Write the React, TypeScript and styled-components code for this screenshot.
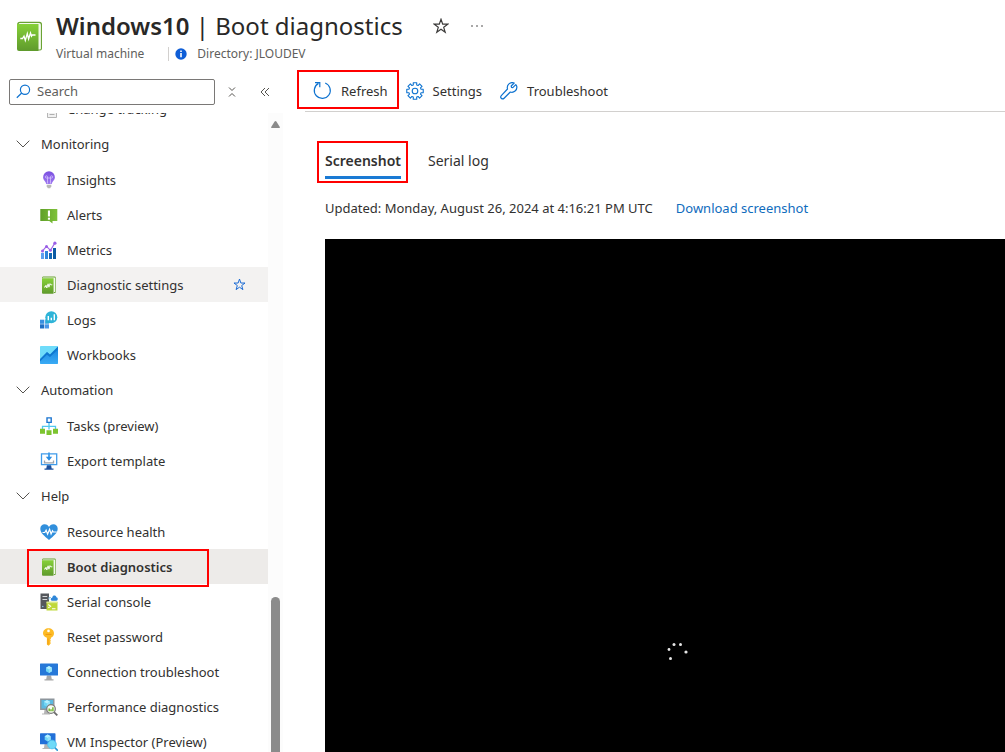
import React from "react";
import styled, { createGlobalStyle, css } from "styled-components";

const GlobalStyle = createGlobalStyle`
  *, *::before, *::after { box-sizing: border-box; }
  body {
    margin: 0;
    background: #fff;
    color: #323130;
    font-family: "Noto Sans", "Segoe UI", sans-serif;
    font-size: 13px;
    line-height: 20px;
  }
  button, input { font: inherit; color: inherit; }
  svg { display: block; flex: none; }
`;

const highlight = css`
  position: relative;
  &::after {
    content: "";
    position: absolute;
    border: 2px solid #ff0000;
    pointer-events: none;
  }
`;

const Page = styled.div`
  display: flex;
  flex-direction: column;
  height: 100vh;
  overflow: hidden;
`;

const Header = styled.header`
  display: flex;
  flex: none;
  gap: 13px;
  height: 70px;
  padding: 9px 16px 0 17px;
`;

const HeaderIcon = styled.div`
  padding-top: 12px;
`;

const TitleRow = styled.div`
  display: flex;
  align-items: center;
  height: 34px;
`;

const Title = styled.h1`
  margin: 0 29px 0 0;
  font-size: 24px;
  line-height: 34px;
  font-weight: 400;
  color: #292827;
  white-space: nowrap;
  strong { font-weight: 600; }
`;

const IconButton = styled.button`
  display: flex;
  align-items: center;
  justify-content: center;
  flex: none;
  width: 18px;
  height: 18px;
  padding: 0;
  border: 0;
  background: none;
`;

const MoreButton = styled(IconButton)`
  margin-left: 18px;
`;

const Subtitle = styled.div`
  display: flex;
  align-items: center;
  height: 22px;
  font-size: 12px;
  color: #605e5c;
  white-space: nowrap;
`;

const Directory = styled.span`
  display: flex;
  align-items: center;
  gap: 10px;
  height: 14px;
  margin-left: 24px;
  padding-left: 6px;
  border-left: 1px solid #d2d0ce;
`;

const Body = styled.div`
  display: flex;
  flex: 1;
  min-height: 0;
`;

const Sidebar = styled.nav`
  display: flex;
  flex-direction: column;
  flex: none;
  width: 283px;
`;

const SearchRow = styled.div`
  display: flex;
  align-items: center;
  flex: none;
  height: 43px;
  padding: 0 9px;
`;

const SearchBox = styled.label`
  display: flex;
  align-items: center;
  gap: 6px;
  width: 206px;
  height: 26px;
  margin-right: 8px;
  padding: 0 6px;
  border: 1px solid #7a7876;
  border-radius: 2px;
`;

const SearchInput = styled.input`
  flex: 1;
  min-width: 0;
  height: 22px;
  padding: 0 0 2px;
  border: 0;
  outline: 0;
  background: none;
  &::placeholder { color: #605e5c; opacity: 1; }
`;

const CollapseButton = styled(IconButton)`
  margin-left: 15px;
`;

const MenuArea = styled.div`
  display: flex;
  flex: 1;
  min-height: 0;
  overflow: hidden;
`;

const Menu = styled.div`
  flex: 1;
  margin-top: -22px;
`;

const List = styled.ul`
  margin: 0;
  padding: 0;
  list-style: none;
`;

const GroupButton = styled.button`
  display: flex;
  align-items: center;
  gap: 11px;
  width: 100%;
  height: 35px;
  margin-bottom: 1px;
  padding: 0 16px;
  border: 0;
  background: none;
  text-align: left;
`;

const Item = styled.li<{ $hover?: boolean; $active?: boolean }>`
  display: flex;
  align-items: center;
  height: 35px;
  padding-right: 20px;
  background: ${(p) => (p.$active ? "#edebe9" : p.$hover ? "#f3f2f1" : "none")};
  font-weight: ${(p) => (p.$active ? 600 : 400)};
  ${(p) =>
    p.$active &&
    css`
      ${highlight}
      &::after { left: 27px; top: 0; width: 182px; height: 38px; }
    `}
`;

const ItemLink = styled.a`
  display: flex;
  flex: 1;
  align-items: center;
  gap: 9px;
  padding-left: 40px;
  color: inherit;
  text-decoration: none;
  white-space: nowrap;
`;

const ScrollTrack = styled.div`
  display: flex;
  flex-direction: column;
  align-items: center;
  flex: none;
  width: 15px;
  padding-top: 7px;
  background: #fcfcfc;
`;

const ScrollThumb = styled.div`
  flex: 1;
  width: 9px;
  margin-top: 468px;
  border-radius: 5px 5px 0 0;
  background: #8b8b8b;
`;

const Main = styled.main`
  display: flex;
  flex-direction: column;
  flex: 1;
  min-width: 0;
  padding-left: 22px;
`;

const Toolbar = styled.div`
  display: flex;
  align-items: center;
  flex: none;
  gap: 18px;
  height: 42px;
  padding-left: 8px;
  border-bottom: 1px solid #d2d0ce;
`;

const Command = styled.button<{ $marked?: boolean }>`
  display: flex;
  align-items: center;
  gap: 9px;
  height: 38px;
  padding: 0;
  border: 0;
  background: none;
  ${(p) =>
    p.$marked &&
    css`
      ${highlight}
      &::after { left: -16px; right: -11px; top: -2px; height: 39px; }
    `}
`;

const Content = styled.div`
  display: flex;
  flex-direction: column;
  flex: 1;
  min-height: 0;
  padding: 33px 0 0 20px;
`;

const Tabs = styled.div`
  display: flex;
  gap: 27px;
`;

const Tab = styled.button<{ $selected?: boolean }>`
  height: 34px;
  padding: 0;
  border: 0;
  border-bottom: 3px solid ${(p) => (p.$selected ? "#1a7ad4" : "transparent")};
  background: none;
  font-size: 14px;
  font-weight: ${(p) => (p.$selected ? 600 : 400)};
  ${(p) =>
    p.$selected &&
    css`
      ${highlight}
      &::after { left: -8px; right: -7px; top: -4px; height: 42px; }
    `}
`;

const Updated = styled.p`
  display: flex;
  flex: none;
  gap: 23px;
  margin: 19px 0 21px;
  white-space: nowrap;
`;

const Download = styled.a`
  color: #0f6cbd;
  text-decoration: none;
`;

const Screen = styled.div`
  flex: 1;
  padding: 403px 0 0 342px;
  background: #000;
`;

/* ---------- icons ---------- */

const Book = ({ w, h }: { w: number; h: number }) => (
  <svg width={w} height={h} viewBox="0 0 26 32" preserveAspectRatio="none">
    <defs>
      <linearGradient id="book" x1="0" y1="0" x2="0" y2="1">
        <stop offset="0" stopColor="#86d039" />
        <stop offset="1" stopColor="#5f9a2c" />
      </linearGradient>
    </defs>
    <path d="M3 .7h19.500q2.500 0 2.500 2.500V27.500q0 2-2 2h-2V3H0q.5-2.300 3-2.300z" fill="#6aa334" />
    <path d="M2.500 1.900H22q1.900 0 1.900 1.900v23.700q0 1-1 1h-2V3.500H1z" fill="#f4faee" />
    <path d="M0 3h21.500V30H2q-2 0-2-2z" fill="url(#book)" />
    <path d="M3.300 17.500h2.200l1.500-2.500 1.300 4.500 2-7 1.300 5.500 1.900-6 1 3.300.8-1.300h3.200" fill="none" stroke="#fff" strokeWidth="1.300" />
  </svg>
);

const Icon = ({ children }: { children: React.ReactNode }) => (
  <svg width="18" height="18" viewBox="0 0 18 18" fill="none">
    {children}
  </svg>
);

const ItemBook = () => (
  <Icon>
    <path d="M3 .6h11.500q1.300 0 1.300 1.300v14.100q0 1-1 1h-1V2.200H2Q2.200.6 3 .6z" fill="#6aa334" />
    <path d="M3 1.400h11.300q.9 0 .9.9v13.700h-1.600V2.400H2.500z" fill="#f4faee" />
    <path d="M2 2.300h11.500V17.700H3q-1 0-1-1z" fill="url(#book)" />
    <path d="M4 11h1.300l.7-1.800.8 2.800 1.300-4.200.8 3.400 1.100-3.600.7 1.200h1.600" stroke="#fff" strokeWidth=".9" />
  </Icon>
);

const Change = () => (
  <Icon>
    <path d="M7.500 2h9v15.500h-9z" fill="#f1f1f1" stroke="#b5b5b5" />
    <path d="M9.500 11.500h5M9.500 14.500h5" stroke="#b0b0b0" />
  </Icon>
);

const Insights = () => (
  <Icon>
    <defs>
      <linearGradient id="bulb" x1="0" y1="0" x2="0" y2="1">
        <stop offset="0" stopColor="#7a4fe0" />
        <stop offset="1" stopColor="#a07af0" />
      </linearGradient>
    </defs>
    <path d="M9 .3a5.900 5.900 0 0 1 5.900 5.900c0 3-2.800 4.100-3.100 6.900H6.200C5.900 10.300 3.100 9.200 3.100 6.200A5.900 5.900 0 0 1 9 .3z" fill="url(#bulb)" />
    <path d="M7.500 12.500V7M10.500 12.500V7M7.500 7H6.200a1.100 1.100 0 1 1 1.300-1.200zM10.500 7h1.300a1.100 1.100 0 1 0-1.300-1.200zM7.500 7h3" stroke="#dccdff" strokeWidth=".7" />
    <path d="M6.700 13.700h4.600v1.500l-1.100 2H7.800l-1.100-2z" fill="#b8b8b8" />
  </Icon>
);

const Alerts = () => (
  <Icon>
    <defs>
      <linearGradient id="alert" x1="0" y1="0" x2="1" y2="0">
        <stop offset="0" stopColor="#5f9f28" />
        <stop offset="1" stopColor="#7fc23a" />
      </linearGradient>
    </defs>
    <path d="M.3 3h17v12h-4.800v2.500L9.300 15h-9z" fill="url(#alert)" />
    <path d="M7.900 4.500H10v6H7.900z" fill="#fff" />
    <path d="M7.900 11.700H10v2H7.900z" fill="#fff" />
  </Icon>
);

const Metrics = () => (
  <Icon>
    <path d="M1 12h3v6H1z" fill="#5ea0ef" />
    <path d="M5 10h3v8H5z" fill="#2f86dc" />
    <path d="M9 12h3v6H9z" fill="#1267b4" />
    <path d="M13 7h3v11h-3z" fill="#0b5aa3" />
    <path d="M2.500 9.800l4-4.500 4 4 4.200-7" stroke="#a067e8" strokeWidth="1.200" />
    <g fill="#9a5fe6">
      <circle cx="2.500" cy="10" r="1.500" />
      <circle cx="6.500" cy="5.400" r="1.500" />
      <circle cx="10.400" cy="9.200" r="1.500" />
      <circle cx="14.900" cy="2.200" r="1.600" />
    </g>
  </Icon>
);

const Logs = () => (
  <Icon>
    <path d="M0 8.700h4.200v4.100H0z" fill="#3a90e0" />
    <path d="M0 13.300h4.200v4.200H0z" fill="#1f6fc4" />
    <path d="M4.800 13.300H9v4.200H4.800z" fill="#4a97e8" />
    <path d="M4.800 8.700H9v4.100H4.800z" fill="#6fb0f2" />
    <circle cx="11.300" cy="6.200" r="6" fill="#2fb4d8" />
    <path d="M5.300 12.500l.5-5 5 4.500z" fill="#2aaed4" />
    <path d="M8.300 5v4.300M11.300 6.800v2.500M14.300 3.300v6" stroke="#fff" strokeWidth="1.400" />
  </Icon>
);

const Workbooks = () => (
  <Icon>
    <defs>
      <linearGradient id="wb" x1="0" y1="0" x2="0" y2="1">
        <stop offset="0" stopColor="#1580dc" />
        <stop offset="1" stopColor="#3aabf5" />
      </linearGradient>
    </defs>
    <rect width="18" height="18" rx=".8" fill="#6fdcfa" />
    <path d="M0 13.500l7-7.200 3 2.500L18 .8V17q0 1-1 1H1q-1 0-1-1z" fill="url(#wb)" />
    <path d="M0 13l7-7 3 2.500L18 .5V3.500l-8 7.500-3-2.300L0 15.500z" fill="#0f78d0" />
  </Icon>
);

const Tasks = () => (
  <Icon>
    <path d="M9 5.500v7M2.500 12.500V9.300h13v3.200" stroke="#50c8f0" strokeWidth="1.300" />
    <path d="M7 .9h4.200v4.500H7z" fill="#fff" stroke="#1a74d0" strokeWidth="1.400" />
    <path d="M0 11.700h5v5H0zM6.500 13.200h5V18h-5zM13 11.700h5v5h-5z" fill="#7cc42f" />
  </Icon>
);

const Export = () => (
  <Icon>
    <path d="M1.500 1.800h15.200v10.900H1.500z" fill="#fff" stroke="#3f9bea" strokeWidth="1.300" />
    <path d="M6.900 13.200h4.200l.6 3.200H13.500v1.400H4.500v-1.400h1.800z" fill="#1b4f9c" />
    <path d="M4.500 8.500v2.300h9V8.500" stroke="#9aa3ad" strokeWidth="1.300" />
    <path d="M9 .5v5.500" stroke="#3f9bea" strokeWidth="1.800" />
    <path d="M5.800 4.800h6.400L9 8.700z" fill="#2a8de2" />
  </Icon>
);

const Health = () => (
  <Icon>
    <path d="M9 17C4.500 13 .3 10 .3 5.700.3 3 2.300 1.300 4.600 1.300 6.700 1.300 8.300 2.500 9 4c.7-1.500 2.300-2.700 4.400-2.700 2.300 0 4.300 1.700 4.300 4.400C17.700 10 13.500 13 9 17z" fill="#318fdc" />
    <path d="M2.500 9.500h2.300l1.300-2.300 1.500 4 2-5 1.500 4.800 1.400-3.200.8 1.200h3.500" stroke="#fff" strokeWidth="1.200" />
  </Icon>
);

const Serial = () => (
  <Icon>
    <path d="M.5.500h8.500V16H.5z" fill="#55585c" />
    <path d="M2.500 3.500h4.700M2.500 6.500h4.700" stroke="#d5d8db" strokeWidth="1.100" />
    <circle cx="2.800" cy="13.500" r=".8" fill="#8fc6e8" />
    <path d="M12.500 7.800c-2.300 0-2.300-3-.3-3.100.4-2.800 3.900-2.600 4.200-.4 1.800.2 1.800 3.200 0 3.500z" fill="#2f86d8" />
    <path d="M9 6.500v-2h2" stroke="#8fc6e8" />
    <path d="M6.500 9h11v8.500h-11z" fill="#bfd83a" />
    <path d="M6.500 8.500h11v1.700h-11z" fill="#d9e98a" />
    <path d="M8.300 11.500l2.300 1.700-2.300 1.700M12 15.800h3.500" stroke="#fff" strokeWidth="1.100" />
  </Icon>
);

const Key = () => (
  <Icon>
    <path d="M8.500.3c3 0 5.500 2 5.500 5 0 2.100-1.200 3.600-3.100 4.400v1l-.8 1 .8 1-.8 1.200.8 1.100-1.200 1.800-1.200 1-1.600-1.200V9.700C4.500 8.900 3 7.400 3 5.300 3 2.300 5.500.3 8.500.3z" fill="#fdbb25" />
    <path d="M8 10.500v6" stroke="#f29a10" strokeWidth=".9" />
    <path d="M5.500 5.900h6v1.100h-6z" fill="#f29a10" />
    <circle cx="8.500" cy="2.900" r="1.300" fill="#fff" />
  </Icon>
);

const Cube = ({ x, y }: { x: number; y: number }) => (
  <g transform={`translate(${x} ${y})`}>
    <path d="M0-3.500l3 1.700v3.500L0 3.500l-3-1.800v-3.500z" fill="#6fd5f5" />
    <path d="M0-3.500l3 1.700L0 0l-3-1.800z" fill="#b5f0ff" />
    <path d="M0 0l3-1.800v3.500L0 3.500z" fill="#94e2fa" />
  </g>
);

const Connection = () => (
  <Icon>
    <path d="M6.900 12.500h4.200l.7 3.800h1.700v1.200h-9v-1.200h1.700z" fill="#a8a8a8" />
    <rect y=".5" width="18" height="12" rx=".6" fill="#2678d8" />
    <Cube x={9} y={6.500} />
  </Icon>
);

const Performance = () => (
  <Icon>
    <path d="M4.500 11.500h4l.5 4H10v1H2v-1h2z" fill="#b5b5b5" />
    <path d="M.8 1.200h13v10H.8z" fill="#5bb9e0" stroke="#8d959c" strokeWidth="1.400" />
    <Cube x={7} y={5.500} />
    <path d="M14 14.200l3.300 3.200" stroke="#6c6c6c" strokeWidth="1.800" />
    <circle cx="11" cy="11" r="4.300" fill="#f7fbf2" stroke="#7d7d7d" strokeWidth="1.300" />
    <path d="M9.200 13.300V10.500M11 13.300v-2M12.900 13.300v-4" stroke="#76b733" strokeWidth="1.500" />
  </Icon>
);

const Inspector = () => (
  <Icon>
    <path d="M4.500 11h4l.5 4H10v1H2.500v-1H4z" fill="#b5b5b5" />
    <rect y=".3" width="15.500" height="11" rx=".6" fill="#2270d8" />
    <Cube x={7.700} y={5} />
    <path d="M14.800 14.600l2.500 2.500" stroke="#2a98d6" strokeWidth="1.600" strokeLinecap="round" />
    <circle cx="12" cy="11.500" r="4.300" fill="#6edaf8" stroke="#54c4ee" />
  </Icon>
);

const Star = ({ size, color }: { size: number; color: string }) => (
  <svg width={size} height={size} viewBox="0 0 16 16" fill="none" stroke={color} strokeWidth="1.200">
    <path d="M8 1.300l1.700 4.900h5.100l-4.100 3.100 1.500 5L8 11.300l-4.200 3 1.500-5-4.100-3.100h5.100z" />
  </svg>
);

const Chevron = () => (
  <svg width="14" height="14" viewBox="0 0 14 14" fill="none" stroke="#55534f">
    <path d="M.7 3.700L7 10l6.300-6.300" />
  </svg>
);

const RefreshIcon = () => (
  <svg width="19" height="19" viewBox="0 0 19 19" fill="none" stroke="#0f73d0" strokeWidth="1.200">
    <path d="M12.200 2A8 8 0 1 1 5.500 2.400" />
    <path d="M2 1.700h4.800v4.500" />
  </svg>
);

const GearIcon = () => {
  const cx = 9, cy = 9;
  const pts: string[] = [];
  for (let i = 0; i < 8; i++) {
    const base = (i * Math.PI) / 4;
    [[-0.27, 6.300], [-0.21, 8.400], [0.21, 8.400], [0.27, 6.300]].forEach(([a, r]) =>
      pts.push(`${(cx + r * Math.sin(base + a)).toFixed(2)},${(cy - r * Math.cos(base + a)).toFixed(2)}`)
    );
  }
  return (
    <svg width="18" height="18" viewBox="0 0 18 18" fill="none" stroke="#0f73d0" strokeWidth="1.100" strokeLinejoin="round">
      <polygon points={pts.join(" ")} />
      <circle cx="9" cy="9" r="2.800" />
    </svg>
  );
};

const WrenchIcon = () => (
  <svg width="18" height="18" viewBox="0 0 18 18" fill="none" stroke="#0f73d0" strokeWidth="1.200" strokeLinejoin="round">
    <path d="M15.800 2.600l-3 3-1.300-.3-.3-1.300 3-3A5 5 0 0 0 7.500 7L1.300 13.600a2 2 0 0 0 0 2.700 2 2 0 0 0 2.800 0L10.300 10a5 5 0 0 0 6.500-5.500 5 5 0 0 0-1-1.900z" />
  </svg>
);

/* ---------- data ---------- */

type Entry = { label: string; icon: React.ReactNode; hover?: boolean; active?: boolean };

const groups: { title?: string; entries: Entry[] }[] = [
  { entries: [{ label: "Change tracking", icon: <Change /> }] },
  {
    title: "Monitoring",
    entries: [
      { label: "Insights", icon: <Insights /> },
      { label: "Alerts", icon: <Alerts /> },
      { label: "Metrics", icon: <Metrics /> },
      { label: "Diagnostic settings", icon: <ItemBook />, hover: true },
      { label: "Logs", icon: <Logs /> },
      { label: "Workbooks", icon: <Workbooks /> },
    ],
  },
  {
    title: "Automation",
    entries: [
      { label: "Tasks (preview)", icon: <Tasks /> },
      { label: "Export template", icon: <Export /> },
    ],
  },
  {
    title: "Help",
    entries: [
      { label: "Resource health", icon: <Health /> },
      { label: "Boot diagnostics", icon: <ItemBook />, active: true },
      { label: "Serial console", icon: <Serial /> },
      { label: "Reset password", icon: <Key /> },
      { label: "Connection troubleshoot", icon: <Connection /> },
      { label: "Performance diagnostics", icon: <Performance /> },
      { label: "VM Inspector (Preview)", icon: <Inspector /> },
    ],
  },
];

export default function App() {
  return (
    <Page>
      <GlobalStyle />
      <Header>
        <HeaderIcon>
          <Book w={26} h={32} />
        </HeaderIcon>
        <div>
          <TitleRow>
            <Title>
              <strong>Windows10</strong> | Boot diagnostics
            </Title>
            <IconButton aria-label="Add to favorites">
              <Star size={16} color="#3b3a39" />
            </IconButton>
            <MoreButton aria-label="More actions">
              <svg width="14" height="4" viewBox="0 0 14 4" fill="#3b3a39">
                <circle cx="2" cy="2" r=".8" />
                <circle cx="7" cy="2" r=".8" />
                <circle cx="12" cy="2" r=".8" />
              </svg>
            </MoreButton>
          </TitleRow>
          <Subtitle>
            Virtual machine
            <Directory>
              <svg width="12" height="12" viewBox="0 0 12 12">
                <circle cx="6" cy="6" r="5.700" fill="#0f5ed7" />
                <path d="M5.200 5h1.600v4.300H5.200zM5.200 2.500h1.600V4H5.200z" fill="#fff" />
              </svg>
              Directory: JLOUDEV
            </Directory>
          </Subtitle>
        </div>
      </Header>
      <Body>
        <Sidebar>
          <SearchRow>
            <SearchBox>
              <svg width="15" height="15" viewBox="0 0 15 15" fill="none" stroke="#0f73d0" strokeWidth="1.200">
                <circle cx="9" cy="5.700" r="4.600" />
                <path d="M5.700 9L.8 13.800" />
              </svg>
              <SearchInput type="text" placeholder="Search" aria-label="Search menu" />
            </SearchBox>
            <IconButton aria-label="Collapse all groups">
              <svg width="8" height="10" viewBox="0 0 8 10" fill="none" stroke="#55534f">
                <path d="M1 .5l3 3 3-3M1 9.500l3-3 3 3" />
              </svg>
            </IconButton>
            <CollapseButton aria-label="Collapse menu">
              <svg width="10" height="10" viewBox="0 0 10 10" fill="none" stroke="#55534f">
                <path d="M5 1L1 5l4 4M9 1L5 5l4 4" />
              </svg>
            </CollapseButton>
          </SearchRow>
          <MenuArea>
            <Menu>
              {groups.map((g, i) => (
                <section key={i}>
                  {g.title && (
                    <GroupButton aria-expanded="true">
                      <Chevron />
                      {g.title}
                    </GroupButton>
                  )}
                  <List>
                    {g.entries.map((e) => (
                      <Item key={e.label} $hover={e.hover} $active={e.active}>
                        <ItemLink href="#">
                          {e.icon}
                          {e.label}
                        </ItemLink>
                        {e.hover && (
                          <IconButton aria-label="Favorite">
                            <Star size={13} color="#1567d3" />
                          </IconButton>
                        )}
                      </Item>
                    ))}
                  </List>
                </section>
              ))}
            </Menu>
            <ScrollTrack>
              <svg width="9" height="9" viewBox="0 0 9 9" fill="#8b8b8b">
                <path d="M3.600 1.500q.9-1 1.800 0L8.800 7q.4 1-.5 1H.7Q-.2 8 .2 7z" />
              </svg>
              <ScrollThumb />
            </ScrollTrack>
          </MenuArea>
        </Sidebar>
        <Main>
          <Toolbar>
            <Command $marked>
              <RefreshIcon />
              Refresh
            </Command>
            <Command>
              <GearIcon />
              Settings
            </Command>
            <Command>
              <WrenchIcon />
              Troubleshoot
            </Command>
          </Toolbar>
          <Content>
            <Tabs role="tablist">
              <Tab role="tab" aria-selected="true" $selected>
                Screenshot
              </Tab>
              <Tab role="tab" aria-selected="false">
                Serial log
              </Tab>
            </Tabs>
            <Updated>
              Updated: Monday, August 26, 2024 at 4:16:21 PM UTC
              <Download href="#">Download screenshot</Download>
            </Updated>
            <Screen role="img" aria-label="Virtual machine screen, starting up">
              <svg width="22" height="20" viewBox="0 0 22 20" fill="#e6e6e6">
                <circle cx="7" cy="2.500" r="1.500" />
                <circle cx="13.500" cy="2.500" r="1.500" />
                <circle cx="2" cy="7.500" r="1.400" />
                <circle cx="19" cy="10" r="1.600" />
                <circle cx="3.500" cy="16.500" r="1.500" />
              </svg>
            </Screen>
          </Content>
        </Main>
      </Body>
    </Page>
  );
}
